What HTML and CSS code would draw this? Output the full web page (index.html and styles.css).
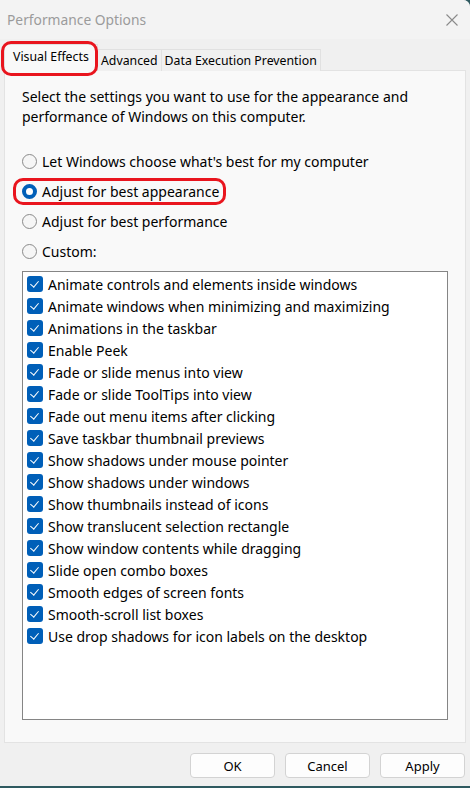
FILE: index.html
```html
<!DOCTYPE html>
<html>
<head>
<meta charset="utf-8">
<link rel="stylesheet" href="styles.css">
</head>
<body>
<div class="window">
  <div class="titlebar">
    <span class="title">Performance Options</span>
    <svg class="close" width="12" height="12" viewBox="0 0 12 12"><path d="M0.5 0.5 L11.5 11.5 M11.5 0.5 L0.5 11.5" stroke="#8a8a8a" stroke-width="1.1" fill="none"/></svg>
  </div>
  <div class="tabs">
    <div class="tab active">Visual Effects</div>
    <div class="tab">Advanced</div>
    <div class="tab">Data Execution Prevention</div>
    <div class="mark mark-tab"></div>
  </div>
  <div class="panel">
    <p class="desc">Select the settings you want to use for the appearance and performance of Windows on this computer.</p>
    <div class="radios">
      <div class="radio"><span class="rb"></span>Let Windows choose what's best for my computer</div>
      <div class="radio"><span class="rb on"></span>Adjust for best appearance<div class="mark mark-radio"></div></div>
      <div class="radio"><span class="rb"></span>Adjust for best performance</div>
      <div class="radio"><span class="rb"></span>Custom:</div>
    </div>
    <div class="list">
      <div class="item"><span class="cb"></span>Animate controls and elements inside windows</div>
      <div class="item"><span class="cb"></span>Animate windows when minimizing and maximizing</div>
      <div class="item"><span class="cb"></span>Animations in the taskbar</div>
      <div class="item"><span class="cb"></span>Enable Peek</div>
      <div class="item"><span class="cb"></span>Fade or slide menus into view</div>
      <div class="item"><span class="cb"></span>Fade or slide ToolTips into view</div>
      <div class="item"><span class="cb"></span>Fade out menu items after clicking</div>
      <div class="item"><span class="cb"></span>Save taskbar thumbnail previews</div>
      <div class="item"><span class="cb"></span>Show shadows under mouse pointer</div>
      <div class="item"><span class="cb"></span>Show shadows under windows</div>
      <div class="item"><span class="cb"></span>Show thumbnails instead of icons</div>
      <div class="item"><span class="cb"></span>Show translucent selection rectangle</div>
      <div class="item"><span class="cb"></span>Show window contents while dragging</div>
      <div class="item"><span class="cb"></span>Slide open combo boxes</div>
      <div class="item"><span class="cb"></span>Smooth edges of screen fonts</div>
      <div class="item"><span class="cb"></span>Smooth-scroll list boxes</div>
      <div class="item"><span class="cb"></span>Use drop shadows for icon labels on the desktop</div>
    </div>
  </div>
  <div class="footer">
    <button class="btn">OK</button>
    <button class="btn">Cancel</button>
    <button class="btn">Apply</button>
  </div>
</div>
</body>
</html>
```

FILE: styles.css
```css
* { box-sizing: border-box; }
html, body { margin: 0; padding: 0; }
body {
  width: 470px;
  height: 788px;
  background: #2f5a60;
  font-family: "Noto Sans", "Open Sans", sans-serif;
  font-size: 14px;
  color: #000;
  overflow: hidden;
}
.window {
  width: 470px;
  height: 786px;
  background: #f0f0f0;
  border-top-right-radius: 7px;
  display: flex;
  flex-direction: column;
}
.titlebar {
  height: 39px;
  background: #f3f3f3;
  display: flex;
  align-items: center;
  justify-content: space-between;
  padding: 0 12px 0 7px;
  border-top-right-radius: 7px;
}
.title {
  color: #9b9b9b;
  font-size: 13.8px;
}
.tabs {
  position: relative;
  height: 32px;
  display: flex;
  align-items: flex-end;
  padding-left: 4px;
  margin-bottom: -1px;
  z-index: 1;
}
.tab {
  height: 22px;
  padding: 0 3px;
  border: 1px solid #e1e1e1;
  border-bottom: none;
  background: #f0f0f0;
  font-size: 12.3px;
  line-height: 21px;
  margin-left: -1px;
  white-space: nowrap;
}
.tab.active {
  height: 27px;
  background: #f9f9f9;
  padding: 0 0 0 8px;
  margin-left: 0;
  line-height: 24px;
  width: 94px;
}
.tab.active + .tab { padding-left: 3px; }
.mark {
  position: absolute;
  border: 3px solid #e9151e;
  border-radius: 10px;
  pointer-events: none;
}
.mark-tab {
  left: 1px;
  top: 2px;
  width: 97px;
  height: 35px;
}
.panel {
  margin: 0 4px;
  height: 673px;
  background: #f9f9f9;
  border: 1px solid #e3e3e3;
  padding: 16px 17px 0 17px;
  display: flex;
  flex-direction: column;
}
.desc {
  margin: 0;
  line-height: 20px;
  font-size: 14px;
  width: 420px;
}
.radios {
  margin-top: 19px;
  display: flex;
  flex-direction: column;
}
.radio {
  position: relative;
  height: 30px;
  display: flex;
  align-items: center;
  font-size: 14px;
}
.rb {
  width: 15px;
  height: 15px;
  border-radius: 50%;
  border: 1px solid #8a8a8a;
  background: #f6f6f6;
  margin: 0 5px 0 0;
  flex: none;
}
.rb.on {
  border: 4px solid #005fb8;
  background: #fff;
}
.mark-radio {
  left: -9px;
  top: 2px;
  width: 213px;
  height: 27px;
}
.list {
  margin-top: 5px;
  height: 449px;
  background: #fff;
  border: 1px solid #858585;
  padding: 1px 4px;
}
.item {
  height: 22px;
  display: flex;
  align-items: center;
  font-size: 14px;
  white-space: nowrap;
}
.cb {
  width: 16px;
  height: 16px;
  border-radius: 3px;
  background: #005fb8;
  margin-right: 5px;
  flex: none;
  position: relative;
}
.cb::after {
  content: "";
  position: absolute;
  left: 5px;
  top: 3px;
  width: 4px;
  height: 7px;
  border-right: 1.3px solid #fff;
  border-bottom: 1.3px solid #fff;
  transform: rotate(40deg);
}
.footer {
  flex: 1;
  display: flex;
  justify-content: flex-end;
  align-items: flex-start;
  gap: 10px;
  padding: 10px 5px 0 0;
}
.btn {
  width: 85px;
  height: 25px;
  border: 1px solid #d3d3d3;
  border-radius: 4px;
  background: #fdfdfd;
  font-family: "Noto Sans", "Open Sans", sans-serif;
  font-size: 13px;
  color: #000;
  padding: 0;
}
```
